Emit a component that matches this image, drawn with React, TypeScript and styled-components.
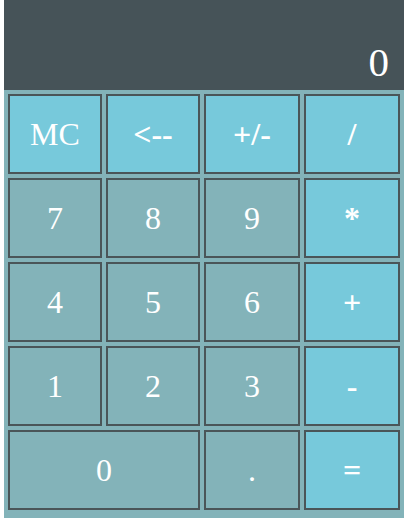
import React from "react";
import styled, { createGlobalStyle } from "styled-components";

const Global = createGlobalStyle`
  html, body { margin: 0; padding: 0; background: #ffffff; }
  body { font-family: "Liberation Serif", "Times New Roman", serif; }
`;

const Calculator = styled.div`
  margin: 0 4px;
  background: #83b3b9;
  display: flex;
  flex-direction: column;
`;

const Display = styled.div`
  height: 90px;
  background: #465358;
  color: #ffffff;
  font-size: 41px;
  display: flex;
  align-items: flex-end;
  justify-content: flex-end;
  padding: 0 15px 7px 0;
  box-sizing: border-box;
  line-height: 1;
`;

const Keys = styled.div`
  display: grid;
  grid-template-columns: 94px 94px 96px 96px;
  grid-auto-rows: 80px;
  gap: 4px;
  padding: 4px 4px 8px 4px;
`;

const Key = styled.button<{ $op?: boolean; $span?: number; $symbol?: boolean }>`
  grid-column: span ${(p) => p.$span ?? 1};
  background: ${(p) => (p.$op ? "#77c9db" : "#83b3b9")};
  border: 2px solid #4a5558;
  color: #ffffff;
  font-family: "Liberation Serif", "Times New Roman", serif;
  font-size: 32px;
  font-weight: ${(p) => (p.$symbol ? "bold" : "normal")};
  padding: 0;
  margin: 0;
  display: flex;
  align-items: center;
  justify-content: center;
  cursor: pointer;
`;

const keys: { label: string; op?: boolean; span?: number; symbol?: boolean }[] = [
  { label: "MC", op: true },
  { label: "<--", op: true, symbol: true },
  { label: "+/-", op: true, symbol: true },
  { label: "/", op: true, symbol: true },
  { label: "7" },
  { label: "8" },
  { label: "9" },
  { label: "*", op: true, symbol: true },
  { label: "4" },
  { label: "5" },
  { label: "6" },
  { label: "+", op: true, symbol: true },
  { label: "1" },
  { label: "2" },
  { label: "3" },
  { label: "-", op: true, symbol: true },
  { label: "0", span: 2 },
  { label: "." },
  { label: "=", op: true, symbol: true },
];

export default function App() {
  return (
    <>
      <Global />
      <Calculator>
        <Display>0</Display>
        <Keys>
          {keys.map((k) => (
            <Key key={k.label} $op={k.op} $span={k.span} $symbol={k.symbol}>
              {k.label}
            </Key>
          ))}
        </Keys>
      </Calculator>
    </>
  );
}
